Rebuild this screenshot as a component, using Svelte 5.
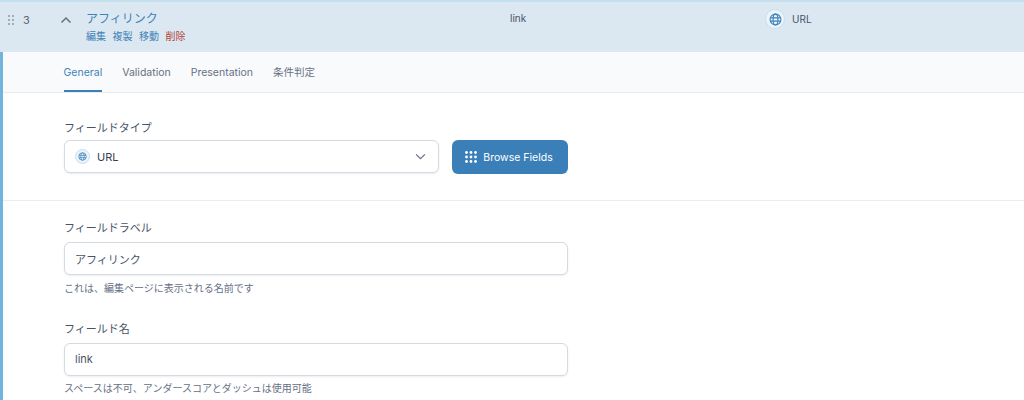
<script>
const tabs = ['General', 'Validation', 'Presentation', '条件判定']
const actions = ['編集', '複製', '移動']
</script>

{#snippet globe(size)}
  <svg class="globe" width={size} height={size} viewBox="0 0 24 24" fill="none" stroke="currentColor" stroke-width="2">
    <circle cx="12" cy="12" r="10" />
    <ellipse cx="12" cy="12" rx="4.5" ry="10" />
    <path d="M2.5 9h19M2.5 15h19" />
  </svg>
{/snippet}

<div class="page">
  <div class="row-head">
    <div class="handle">
      {#each Array(6) as _}<i></i>{/each}
    </div>
    <span class="order">3</span>
    <svg class="caret" width="12" height="8" viewBox="0 0 12 8" fill="none" stroke="currentColor" stroke-width="1.5">
      <path d="M1.5 6.5 6 2l4.5 4.5" />
    </svg>
    <div class="title">
      <a href="#top" class="name">アフィリンク</a>
      <div class="actions">
        {#each actions as a}<a href="#top">{a}</a>{/each}
        <a href="#top" class="del">削除</a>
      </div>
    </div>
    <span class="col-name">link</span>
    <div class="col-type">
      <span class="badge">{@render globe(13)}</span>
      URL
    </div>
  </div>

  <div class="body">
    <div class="tabs">
      {#each tabs as tab, i}
        <span class="tab" class:active={i === 0}>{tab}</span>
      {/each}
    </div>

    <section class="type-section">
      <div class="label">フィールドタイプ</div>
      <div class="type-row">
        <div class="select">
          <span class="badge small">{@render globe(9)}</span>
          <span class="select-text">URL</span>
          <svg class="chevron" width="11" height="7" viewBox="0 0 12 8" fill="none" stroke="currentColor" stroke-width="1.4">
            <path d="M1 1.5 6 6.5l5-5" />
          </svg>
        </div>
        <button class="browse">
          <svg width="12" height="12" viewBox="0 0 12 12" fill="currentColor">
            {#each [1.5, 6, 10.5] as y}
              {#each [1.5, 6, 10.5] as x}
                <circle cx={x} cy={y} r="1.4" />
              {/each}
            {/each}
          </svg>
          Browse Fields
        </button>
      </div>
    </section>

    <section class="fields">
      <div class="field">
        <div class="label">フィールドラベル</div>
        <input type="text" value="アフィリンク" />
        <p class="hint">これは、編集ページに表示される名前です</p>
      </div>
      <div class="field">
        <div class="label">フィールド名</div>
        <input type="text" value="link" />
        <p class="hint">スペースは不可、アンダースコアとダッシュは使用可能</p>
      </div>
    </section>
  </div>
</div>

<style>
:global(body) {
  background: #fff;
  overflow: hidden;
}

.page {
  width: 1024px;
  height: 400px;
  overflow: hidden;
  font-family: Inter, "Noto Sans CJK JP", sans-serif;
  font-size: 11px;
  color: #475467;
}

.row-head {
  height: 50px;
  background: #dbe8f1;
  border-top: 2px solid #c4e0ed;
  display: flex;
  align-items: flex-start;
}

.handle {
  display: grid;
  grid-template-columns: 2px 2px;
  gap: 2px;
  margin: 13px 0 0 8px;
}

.handle i {
  width: 2px;
  height: 2px;
  background: #a4acb8;
}

.order {
  margin: 11px 0 0 9px;
  width: 37px;
  color: #5b6472;
}

.caret {
  margin-top: 14px;
  color: #667085;
}

.title {
  margin: 9px 0 0 14px;
  width: 424px;
}

.name {
  display: block;
  font-size: 12px;
  line-height: 16px;
  color: #3f82b8;
  text-decoration: none;
}

.actions {
  display: flex;
  gap: 6.5px;
  margin-top: 2px;
  font-size: 10px;
  line-height: 14px;
}

.actions a {
  color: #3f82b8;
  text-decoration: none;
}

.actions a.del {
  color: #b5403a;
}

.col-name {
  margin-top: 10px;
  width: 257px;
  font-size: 10px;
}

.col-type {
  margin-top: 7px;
  margin-left: -2px;
  display: flex;
  align-items: center;
  gap: 7px;
  font-size: 10px;
}

.badge {
  width: 20px;
  height: 20px;
  border-radius: 50%;
  background: #ebf4fa;
  border: 1px solid #c6dff0;
  box-sizing: border-box;
  display: flex;
  align-items: center;
  justify-content: center;
  color: #3f82b8;
}

.badge.small {
  width: 15px;
  height: 15px;
}

.globe {
  display: block;
}

.body {
  border-left: 3px solid #72b4dc;
  height: 348px;
}

.tabs {
  height: 40px;
  background: #f9fafb;
  border-bottom: 1px solid #eaecf0;
  display: flex;
  gap: 20px;
  padding-left: 60.5px;
}

.tab {
  line-height: 41px;
  height: 40px;
  color: #667085;
  font-size: 10.5px;
  box-sizing: border-box;
}

.tab.active {
  color: #3f82b8;
  border-bottom: 2px solid #3a7fb7;
}

.type-section {
  padding: 27px 61px 26px;
  border-bottom: 1px solid #eaecf0;
}

.label {
  font-size: 11px;
  line-height: 16px;
  color: #475467;
  margin-bottom: 4px;
}

.type-row {
  display: flex;
  gap: 13px;
}

.select {
  width: 375px;
  height: 33px;
  box-sizing: border-box;
  border: 1px solid #d5d9e2;
  border-radius: 6px;
  box-shadow: 0 1px 2px rgba(16, 24, 40, 0.08);
  background: #fff;
  display: flex;
  align-items: center;
  padding: 0 12px 0 10px;
  gap: 7px;
}

.select-text {
  flex: 1;
  color: #344054;
}

.chevron {
  color: #667085;
}

.browse {
  width: 116px;
  height: 34px;
  border: 0;
  border-radius: 6px;
  background: #3a7fb7;
  color: #fff;
  font: 400 10.5px Inter, sans-serif;
  display: flex;
  align-items: center;
  justify-content: center;
  gap: 6px;
  padding: 0 2px 0 0;
}

.fields {
  padding: 19px 61px 0;
}

.field {
  margin-bottom: 26px;
}

.field .label {
  margin-bottom: 6px;
}

input {
  display: block;
  width: 504px;
  height: 33px;
  box-sizing: border-box;
  border: 1px solid #d5d9e2;
  border-radius: 6px;
  box-shadow: 0 1px 2px rgba(16, 24, 40, 0.08);
  padding: 0 10px;
  font: 11px Inter, "Noto Sans CJK JP", sans-serif;
  color: #475467;
  outline: none;
}

.hint {
  margin: 5.5px 0 0;
  font-size: 10px;
  line-height: 14px;
  color: #667085;
}
</style>
